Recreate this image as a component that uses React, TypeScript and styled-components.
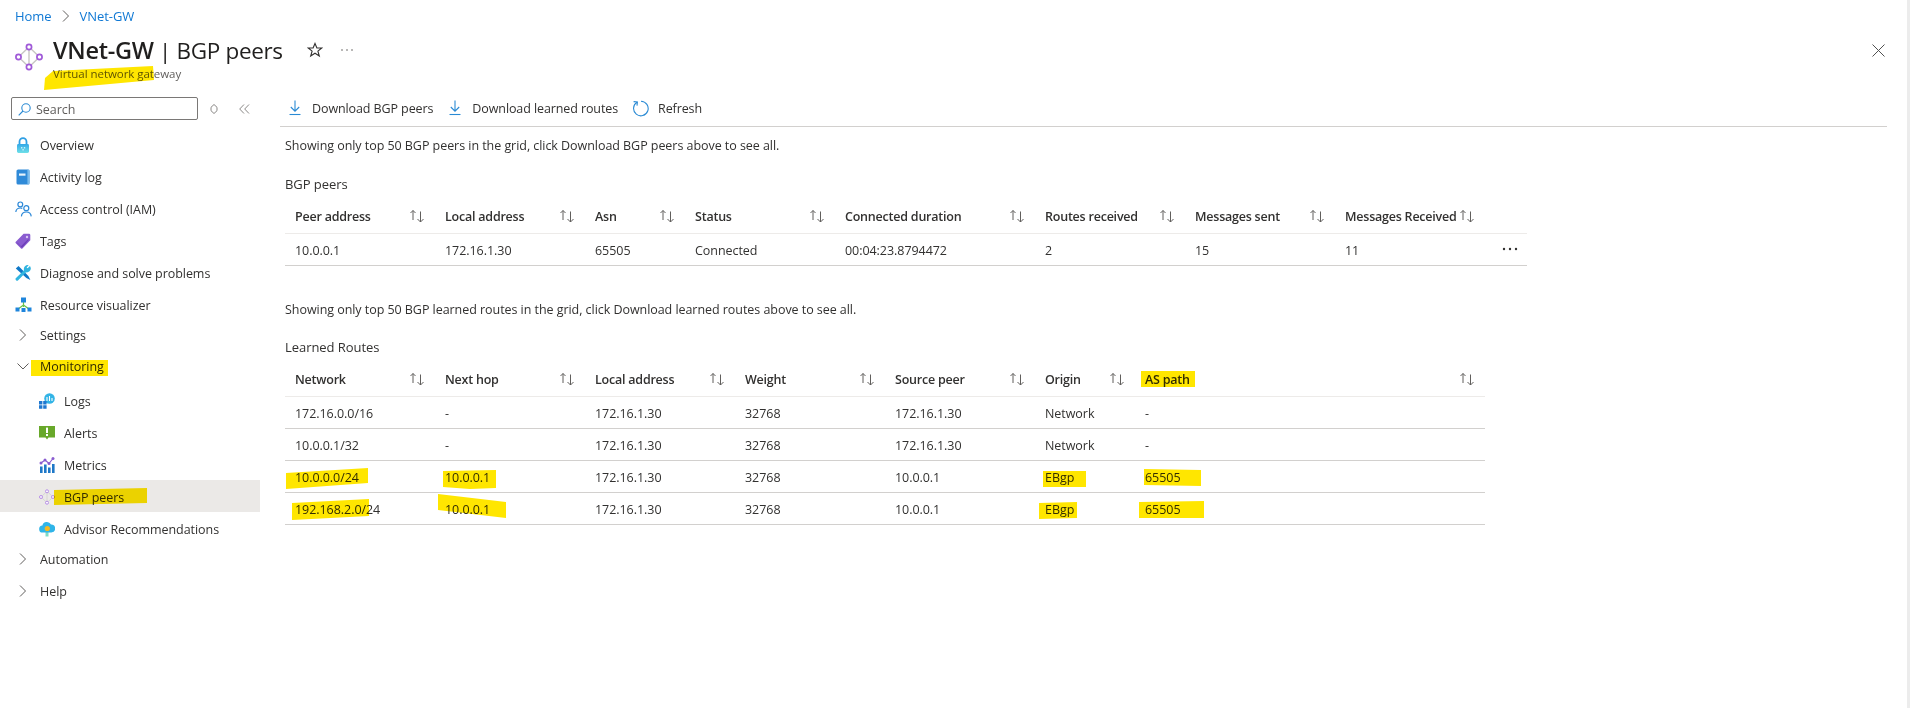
import React from 'react';
import styled, { createGlobalStyle } from 'styled-components';

const GlobalStyle = createGlobalStyle`
	html, body {
		margin: 0;
		padding: 0;
		background: #fff;
	}
	body {
		font-family: 'Open Sans', 'Noto Sans', sans-serif;
		font-size: 12.5px;
		letter-spacing: -0.05px;
		color: #323130;
	}
	svg {
		display: block;
	}
`;

const Page = styled.div`
	position: relative;
	width: 1910px;
	height: 708px;
	box-sizing: border-box;
	border-right: 3px solid #ececec;
	overflow: hidden;
`;

const Marks = styled.svg`
	position: absolute;
	left: 0;
	top: 0;
	mix-blend-mode: multiply;
	pointer-events: none;
`;

const Header = styled.header`
	height: 90px;
	box-sizing: border-box;
	padding: 7px 22px 0 15px;
	position: relative;
`;

const Crumbs = styled.nav`
	display: flex;
	align-items: center;
	height: 18px;
	gap: 8px;
	color: #0f78d4;
	font-size: 13px;
`;

const TitleRow = styled.div`
	display: flex;
	align-items: flex-start;
	margin-top: 8px;
`;

const TitleIcon = styled.div`
	width: 38px;
	padding-top: 10px;
	flex: none;
`;

const TitleText = styled.div`
	display: flex;
	flex-direction: column;
`;

const Title = styled.h1`
	margin: 0;
	font-size: 22.5px;
	line-height: 34px;
	font-weight: 400;
	color: #201f1e;
	white-space: nowrap;
	letter-spacing: -0.35px;
	b {
		font-size: 23.5px;
		font-weight: 600;
		letter-spacing: -0.3px;
	}
`;

const Subtitle = styled.div`
	font-size: 11.5px;
	line-height: 16px;
	color: #605e5c;
	margin-top: -2px;
`;

const TitleActions = styled.div`
	display: flex;
	align-items: center;
	gap: 17px;
	height: 34px;
	margin-left: 24px;
`;

const CloseButton = styled.div`
	margin-left: auto;
	height: 34px;
	display: flex;
	align-items: center;
`;

const Body = styled.div`
	display: flex;
	align-items: flex-start;
`;

const Sidebar = styled.aside`
	width: 260px;
	margin-right: 20px;
	flex: none;
	padding-top: 7px;
`;

const SearchRow = styled.div`
	display: flex;
	align-items: center;
	padding-left: 11px;
	margin-bottom: 8px;
`;

const SearchBox = styled.div`
	width: 187px;
	height: 23px;
	box-sizing: border-box;
	border: 1px solid #7a7876;
	border-radius: 2px;
	display: flex;
	align-items: center;
	gap: 5px;
	padding: 1px 0 0 6px;
	color: #605e5c;
	font-size: 12.5px;
`;

const SearchTools = styled.div`
	display: flex;
	align-items: center;
	gap: 20px;
	margin-left: 11px;
`;

const NavRow = styled.div<{ $selected?: boolean; $sub?: boolean }>`
	display: flex;
	align-items: center;
	height: 32px;
	padding-left: ${(p) => (p.$sub ? '39px' : '15px')};
	gap: 9px;
	background: ${(p) => (p.$selected ? '#ebe9e7' : 'transparent')};
	padding-top: 2px;
	box-sizing: border-box;
`;

const NavIcon = styled.span`
	width: 16px;
	height: 16px;
	flex: none;
`;

const NavGroup = styled.div<{ $low?: boolean }>`
	display: flex;
	align-items: center;
	height: 30px;
	margin-bottom: 1px;
	padding-left: 17px;
	padding-top: ${(p) => (p.$low ? '2px' : '0')};
	box-sizing: border-box;
	gap: 11px;
`;

const SubNav = styled.div`
	padding-top: 2px;
`;

const Main = styled.main`
	flex: 1;
	margin-right: 20px;
`;

const Toolbar = styled.div`
	display: flex;
	align-items: center;
	height: 37px;
	box-sizing: border-box;
	padding-left: 7px;
	border-bottom: 1px solid #d2d0ce;
	gap: 14px;
`;

const ToolButton = styled.div`
	display: flex;
	align-items: center;
	gap: 9px;
	letter-spacing: -0.1px;
	white-space: nowrap;
`;

const Content = styled.div`
	padding: 10px 0 0 5px;
`;

const Notice = styled.div<{ $gap?: number }>`
	line-height: 18px;
	margin-top: ${(p) => p.$gap ?? 0}px;
`;

const Label = styled.div<{ $gap?: number }>`
	line-height: 18px;
	margin-top: ${(p) => p.$gap ?? 20}px;
	font-size: 13px;
`;

const Table = styled.div<{ $width: number }>`
	width: ${(p) => p.$width}px;
	margin-top: 8px;
`;

const HeadRow = styled.div<{ $cols: string }>`
	display: grid;
	grid-template-columns: ${(p) => p.$cols};
	height: 33px;
	border-bottom: 1px solid #edebe9;
	box-sizing: border-box;
`;

const DataRow = styled.div<{ $cols: string }>`
	display: grid;
	grid-template-columns: ${(p) => p.$cols};
	height: 32px;
	border-bottom: 1px solid #d2d0ce;
	box-sizing: border-box;
`;

const HeadCell = styled.div`
	display: flex;
	align-items: center;
	justify-content: space-between;
	padding: 0 10px 2px 10px;
	font-weight: 600;
	letter-spacing: -0.22px;
	white-space: nowrap;
`;

const Cell = styled.div`
	display: flex;
	align-items: center;
	padding: 2px 10px 0;
	white-space: nowrap;
`;

const MoreCell = styled(Cell)`
	justify-content: flex-end;
	padding: 0 9px 2px 0;
`;

const SortArrows = () => (
	<svg width="16" height="14" viewBox="0 0 16 14" fill="none" stroke="#605e5c" strokeWidth="1">
		<path d="M4 11V1.5M1.5 4 4 1.5 6.5 4" />
		<path d="M11.5 2.5V13M8.5 10l3 3 3-3" />
	</svg>
);

const Chevron = ({ open }: { open?: boolean }) => (
	<svg width="12" height="12" viewBox="0 0 12 12" fill="none" stroke="#605e5c" strokeWidth="1">
		{open ? <path d="M0.5 3.5 6 9l5.5-5.5" /> : <path d="M3 0.5 8.5 6 3 11.5" />}
	</svg>
);

const DownloadIcon = () => (
	<svg width="16" height="16" viewBox="0 0 16 16" fill="none" stroke="#2a8ad4" strokeWidth="1.1">
		<path d="M8 0.5V11M3.8 7l4.2 4.2L12.2 7" />
		<path d="M2.5 14.5h11" />
	</svg>
);

const RefreshIcon = () => (
	<svg width="17" height="17" viewBox="0 0 17 17" fill="none" stroke="#2a8ad4" strokeWidth="1.1">
		<path d="M5 2.3A7.3 7.3 0 1 0 9 1.2" />
		<path d="M1.6 1.6 5.4 2l-.4 3.6" />
	</svg>
);

const GatewayIcon = ({ size = 28, ring = '#a05ad8', line = '#c8c6c4' }: { size?: number; ring?: string; line?: string }) => (
	<svg width={size} height={size} viewBox="0 0 28 28" fill="none">
		<path d="M14 4 3.5 14 14 24 24.5 14Z M14 4V24" stroke={line} strokeWidth="1.4" />
		<g fill="#fff" stroke={ring} strokeWidth="1.7">
			<circle cx="14" cy="4" r="2.6" />
			<circle cx="3.5" cy="14" r="2.6" />
			<circle cx="24.5" cy="14" r="2.6" />
			<circle cx="14" cy="24" r="2.6" />
		</g>
	</svg>
);

const OverviewIcon = () => (
	<svg width="16" height="16" viewBox="0 0 16 16">
		<defs>
			<linearGradient id="overviewFill" x1="0" y1="0" x2="0" y2="1">
				<stop offset="0" stopColor="#32a8e8" />
				<stop offset="1" stopColor="#6fe0e8" />
			</linearGradient>
		</defs>
		<path d="M4.5 8V4.7a3.5 3.5 0 0 1 7 0V8" fill="none" stroke="#2f9fe4" strokeWidth="1.8" />
		<rect x="2" y="7" width="12" height="9" rx="1.4" fill="url(#overviewFill)" />
		<path d="M6 10h1.4v1.4H6zM8.8 10h1.4v1.4H8.8zM7.4 12h1.4v1.4H7.4z" fill="#c6f0fb" />
	</svg>
);

const ActivityIcon = () => (
	<svg width="16" height="16" viewBox="0 0 16 16">
		<rect x="1.5" y="0.5" width="13" height="15" rx="1.6" fill="#2f8ad8" />
		<rect x="12.4" y="0.5" width="2.1" height="15" rx="1" fill="#7cbcec" />
		<rect x="4" y="4.5" width="6.5" height="2.2" fill="#e6f2fb" />
	</svg>
);

const AccessIcon = () => (
	<svg width="17" height="16" viewBox="0 0 17 16" fill="none" stroke="#2b88d8" strokeWidth="1.2">
		<circle cx="5.3" cy="3.4" r="2.4" />
		<path d="M0.8 11c.3-2.6 2-4 4.5-4 .8 0 1.5.2 2 .4" />
		<circle cx="11.3" cy="7.2" r="2.5" />
		<path d="M6.4 15.4c.2-2.8 2.1-4.4 4.9-4.4s4.7 1.6 4.9 4.4" />
	</svg>
);

const TagsIcon = () => (
	<svg width="16" height="16" viewBox="0 0 16 16">
		<path d="M8.6 0.7h5.4a1.3 1.3 0 0 1 1.3 1.3v5.3L7.4 15.5a1 1 0 0 1-1.4 0L0.8 10.2a1 1 0 0 1 0-1.4Z" fill="#8a5cd0" />
		<path d="M2.8 10 6 13.3 13.5 5.7 13.5 7.2 7 14.8 1.5 9.5Z" fill="#6d3fb8" />
		<circle cx="12" cy="4" r="1.2" fill="#d9c8f2" />
	</svg>
);

const DiagnoseIcon = () => (
	<svg width="16" height="16" viewBox="0 0 16 16">
		<path d="M0.8 3.6 3.5 1l9.9 10 2 4-4-2Z" fill="#0f78c8" />
		<path d="M15 1.1 12.6 3.3l-1-.9L13.7 0.2A4 4 0 0 0 9 5.2L1 13a1.5 1.5 0 0 0 2.2 2.2L11 7.3A4 4 0 0 0 15.8 3Z" fill="#32b5e0" />
	</svg>
);

const ResourceIcon = () => (
	<svg width="17" height="16" viewBox="0 0 17 16">
		<path d="M8.5 5V10M8.5 8 2.5 12.5M8.5 8 14.5 12.5" fill="none" stroke="#6cc24a" strokeWidth="1.2" />
		<rect x="6" y="0.5" width="5" height="5" fill="#1f85dc" />
		<rect x="0.5" y="10.5" width="4" height="4" fill="#1f85dc" />
		<rect x="6.5" y="11" width="4" height="4" fill="#1f85dc" />
		<rect x="12.5" y="10.5" width="4" height="4" fill="#1f85dc" />
	</svg>
);

const LogsIcon = () => (
	<svg width="16" height="16" viewBox="0 0 16 16">
		<circle cx="10.5" cy="5.5" r="5.3" fill="#32b4e6" />
		<path d="M8 4v4M10.5 3v5M13 5v3" stroke="#fff" strokeWidth="1.1" />
		<path d="M0 8h3.4v3.4H0zM4.2 8h3.4v3.4H4.2zM0 12.3h3.4v3.4H0zM4.2 12.3h3.4v3.4H4.2z" fill="#1f78d0" />
	</svg>
);

const AlertsIcon = () => (
	<svg width="16" height="16" viewBox="0 0 16 16">
		<path d="M0 1h16v11.5H9.5L8 14.5 6.5 12.5H0Z" fill="#68a82a" />
		<rect x="7" y="2.6" width="2" height="5.4" fill="#fff" />
		<rect x="7" y="9" width="2" height="2" fill="#fff" />
	</svg>
);

const MetricsIcon = () => (
	<svg width="16" height="16" viewBox="0 0 16 16">
		<path d="M1 9.5h2.6V16H1zM5 7.5h2.6V16H5zM9 10.5h2.6V16H9zM13 7h2.6v9H13z" fill="#1f78c8" />
		<path d="M2 6 6 3 10 6.5 14 1.5" fill="none" stroke="#8a5cd0" strokeWidth="1.2" />
		<g fill="#8a5cd0">
			<circle cx="2" cy="6" r="1.5" />
			<circle cx="6" cy="3" r="1.5" />
			<circle cx="10" cy="6.5" r="1.5" />
			<circle cx="14" cy="1.5" r="1.5" />
		</g>
	</svg>
);

const AdvisorIcon = () => (
	<svg width="16" height="16" viewBox="0 0 16 16">
		<path d="M6.5 11h3v4.5h-3z" fill="#7fdcc8" />
		<path d="M4 11.6a3.5 3.5 0 0 1-.6-7A4.6 4.6 0 0 1 12 3.6a4 4 0 0 1 .3 8Z" fill="#2fb4e8" />
		<circle cx="8.3" cy="7.5" r="2.6" fill="#f5b81f" />
	</svg>
);

const peerCols = '150px 150px 100px 150px 200px 150px 150px 150px 42px';
const routeCols = '150px 150px 150px 150px 150px 100px 350px';

const peerHeads = ['Peer address', 'Local address', 'Asn', 'Status', 'Connected duration', 'Routes received', 'Messages sent', 'Messages Received'];
const peerRow = ['10.0.0.1', '172.16.1.30', '65505', 'Connected', '00:04:23.8794472', '2', '15', '11'];

const routeHeads = ['Network', 'Next hop', 'Local address', 'Weight', 'Source peer', 'Origin', 'AS path'];
const routes = [
	['172.16.0.0/16', '-', '172.16.1.30', '32768', '172.16.1.30', 'Network', '-'],
	['10.0.0.1/32', '-', '172.16.1.30', '32768', '172.16.1.30', 'Network', '-'],
	['10.0.0.0/24', '10.0.0.1', '172.16.1.30', '32768', '10.0.0.1', 'EBgp', '65505'],
	['192.168.2.0/24', '10.0.0.1', '172.16.1.30', '32768', '10.0.0.1', 'EBgp', '65505'],
];

const topItems = [
	{ name: 'Overview', icon: <OverviewIcon /> },
	{ name: 'Activity log', icon: <ActivityIcon /> },
	{ name: 'Access control (IAM)', icon: <AccessIcon /> },
	{ name: 'Tags', icon: <TagsIcon /> },
	{ name: 'Diagnose and solve problems', icon: <DiagnoseIcon /> },
	{ name: 'Resource visualizer', icon: <ResourceIcon /> },
];

const subItems = [
	{ name: 'Logs', icon: <LogsIcon /> },
	{ name: 'Alerts', icon: <AlertsIcon /> },
	{ name: 'Metrics', icon: <MetricsIcon /> },
	{ name: 'BGP peers', icon: <GatewayIcon size={16} ring="#b58ae6" line="#d2d0ce" />, selected: true },
	{ name: 'Advisor Recommendations', icon: <AdvisorIcon /> },
];

// yellow marker strokes drawn on top of the screenshot
const strokes = [
	'53,71 153,66 154,80 44,90 45,78',
	'31,360 108,360 108,376 31,376',
	'54,490 147,488 147,503 54,505',
	'286,473 368,468 368,483 286,489',
	'443,471 496,470 496,488 470,489 443,487',
	'292,503 369,499 369,516 292,520',
	'438,494 506,502 506,518 438,510',
	'1141,371 1195,371 1195,387 1141,387',
	'1043,471 1086,471 1086,487 1043,487',
	'1144,469 1201,470 1201,486 1144,485',
	'1039,503 1077,502 1077,518 1039,519',
	'1139,502 1204,501 1204,518 1139,518',
];

export default function App() {
	return (
		<Page>
			<GlobalStyle />
			<Header>
				<Crumbs>
					<span>Home</span>
					<Chevron />
					<span>VNet-GW</span>
				</Crumbs>
				<TitleRow>
					<TitleIcon>
						<GatewayIcon />
					</TitleIcon>
					<TitleText>
						<Title>
							<b>VNet-GW</b> | BGP peers
						</Title>
						<Subtitle>Virtual network gateway</Subtitle>
					</TitleText>
					<TitleActions>
						<svg width="16" height="16" viewBox="0 0 16 16" fill="none" stroke="#323130" strokeWidth="1.1">
							<path d="M8 1.5 9.9 6h4.800l-3.800 3.100 1.400 4.900L8 11.200 3.700 14l1.400-4.900L1.300 6h4.800Z" />
						</svg>
						<svg width="14" height="4" viewBox="0 0 14 4" fill="#605e5c">
							<circle cx="2" cy="2" r="0.8" />
							<circle cx="7" cy="2" r="0.8" />
							<circle cx="12" cy="2" r="0.8" />
						</svg>
					</TitleActions>
					<CloseButton>
						<svg width="13" height="13" viewBox="0 0 13 13" stroke="#505050" strokeWidth="1">
							<path d="M0.5 0.5 12.5 12.5M12.5 0.5 0.5 12.5" />
						</svg>
					</CloseButton>
				</TitleRow>
			</Header>
			<Body>
				<Sidebar>
					<SearchRow>
						<SearchBox>
							<svg width="13" height="13" viewBox="0 0 13 13" fill="none" stroke="#2a8ad4" strokeWidth="1.1">
								<circle cx="8" cy="5" r="4.2" />
								<path d="M5 8 0.7 12.3" />
							</svg>
							Search
						</SearchBox>
						<SearchTools>
							<svg width="10" height="12" viewBox="0 0 10 12" fill="none" stroke="#8a8886" strokeWidth="1">
								<path d="M5 1.500 8 4.300v3.400L5 10.500 2 7.700V4.300Z" />
							</svg>
							<svg width="11" height="10" viewBox="0 0 11 10" fill="none" stroke="#8a8886" strokeWidth="1">
								<path d="M5 0.500 0.700 5 5 9.500M10 0.500 5.700 5 10 9.500" />
							</svg>
						</SearchTools>
					</SearchRow>
					{topItems.map((item) => (
						<NavRow key={item.name}>
							<NavIcon>{item.icon}</NavIcon>
							{item.name}
						</NavRow>
					))}
					<NavGroup>
						<Chevron />
						Settings
					</NavGroup>
					<NavGroup>
						<Chevron open />
						Monitoring
					</NavGroup>
					<SubNav>
						{subItems.map((item) => (
							<NavRow key={item.name} $sub $selected={item.selected}>
								<NavIcon>{item.icon}</NavIcon>
								{item.name}
							</NavRow>
						))}
					</SubNav>
					<NavGroup>
						<Chevron />
						Automation
					</NavGroup>
					<NavGroup $low>
						<Chevron />
						Help
					</NavGroup>
				</Sidebar>
				<Main>
					<Toolbar>
						<ToolButton>
							<DownloadIcon />
							Download BGP peers
						</ToolButton>
						<ToolButton>
							<DownloadIcon />
							Download learned routes
						</ToolButton>
						<ToolButton>
							<RefreshIcon />
							Refresh
						</ToolButton>
					</Toolbar>
					<Content>
						<Notice>Showing only top 50 BGP peers in the grid, click Download BGP peers above to see all.</Notice>
						<Label>BGP peers</Label>
						<Table $width={1242}>
							<HeadRow $cols={peerCols}>
								{peerHeads.map((h) => (
									<HeadCell key={h}>
										{h}
										<SortArrows />
									</HeadCell>
								))}
								<span />
							</HeadRow>
							<DataRow $cols={peerCols}>
								{peerRow.map((v) => (
									<Cell key={v}>{v}</Cell>
								))}
								<MoreCell>
									<svg width="16" height="4" viewBox="0 0 16 4" fill="#323130">
										<circle cx="2" cy="2" r="1.2" />
										<circle cx="8" cy="2" r="1.2" />
										<circle cx="14" cy="2" r="1.2" />
									</svg>
								</MoreCell>
							</DataRow>
						</Table>
						<Notice $gap={35}>Showing only top 50 BGP learned routes in the grid, click Download learned routes above to see all.</Notice>
						<Label $gap={19}>Learned Routes</Label>
						<Table $width={1200}>
							<HeadRow $cols={routeCols}>
								{routeHeads.map((h) => (
									<HeadCell key={h}>
										{h}
										<SortArrows />
									</HeadCell>
								))}
							</HeadRow>
							{routes.map((row) => (
								<DataRow key={row[0]} $cols={routeCols}>
									{row.map((v, i) => (
										<Cell key={i}>{v}</Cell>
									))}
								</DataRow>
							))}
						</Table>
					</Content>
				</Main>
			</Body>
			<Marks width="1910" height="708" viewBox="0 0 1910 708">
				{strokes.map((points) => (
					<polygon key={points} points={points} fill="#ffe600" />
				))}
			</Marks>
		</Page>
	);
}
